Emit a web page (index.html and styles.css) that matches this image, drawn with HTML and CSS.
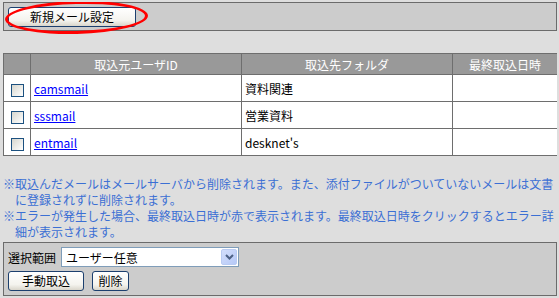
FILE: index.html
```html
<!DOCTYPE html>
<html lang="ja">
<head>
    <meta charset="UTF-8">
    <title>メール取込設定</title>
    <link rel="stylesheet" href="styles.css">
</head>
<body>
    <div class="toolbar">
        <button class="btn new-btn">新規メール設定</button>
        <span class="mark"></span>
    </div>

    <table class="mail-list">
        <thead>
            <tr>
                <th class="col-check"></th>
                <th class="col-user">取込元ユーザID</th>
                <th class="col-folder">取込先フォルダ</th>
                <th class="col-date">最終取込日時</th>
            </tr>
        </thead>
        <tbody>
            <tr>
                <td class="cell-check"><span class="check"></span></td>
                <td><a href="#">camsmail</a></td>
                <td>資料関連</td>
                <td></td>
            </tr>
            <tr>
                <td class="cell-check"><span class="check"></span></td>
                <td><a href="#">sssmail</a></td>
                <td>営業資料</td>
                <td></td>
            </tr>
            <tr>
                <td class="cell-check"><span class="check"></span></td>
                <td><a href="#">entmail</a></td>
                <td>desknet's</td>
                <td></td>
            </tr>
        </tbody>
    </table>

    <div class="notes">
        <p class="note">※取込んだメールはメールサーバから削除されます。また、添付ファイルがついていないメールは文書<br>に登録されずに削除されます。</p>
        <p class="note">※エラーが発生した場合、最終取込日時が赤で表示されます。最終取込日時をクリックするとエラー詳<br>細が表示されます。</p>
    </div>

    <div class="panel">
        <div class="range-row">
            <span class="range-label">選択範囲</span>
            <div class="select-box">
                <span class="select-text">ユーザー任意</span>
                <span class="select-arrow">
                    <svg width="9" height="6" viewBox="0 0 9 6"><path d="M1 1 L4.5 4.5 L8 1" fill="none" stroke="#4d6185" stroke-width="2"/></svg>
                </span>
            </div>
        </div>
        <div class="action-row">
            <button class="btn run-btn">手動取込</button>
            <button class="btn del-btn">削除</button>
        </div>
    </div>
</body>
</html>
```

FILE: styles.css
```css
* {
    box-sizing: border-box;
}

body {
    margin: 2px 2px 0 3px;
    background-color: #dedede;
    font-family: 'Noto Sans CJK JP', 'Noto Sans', sans-serif;
    font-size: 12px;
    color: #000;
}

/* Toolbar */
.toolbar {
    position: relative;
    height: 29px;
    padding: 4px 4px 3px;
    background-color: #cccccc;
    border: 1px solid #6b6b6b;
}

.btn {
    height: 20px;
    padding: 0 6px;
    font-family: inherit;
    font-size: 12px;
    line-height: 18px;
    color: #000;
    background: linear-gradient(#ffffff, #f4f3ee 70%, #d9d5cb);
    border: 1px solid #1c3f6e;
    border-radius: 3px;
    cursor: pointer;
}

.new-btn {
    width: 128px;
}

.mark {
    position: absolute;
    left: 1px;
    top: -2px;
    width: 143px;
    height: 33px;
    border: 3px solid #ff0000;
    border-radius: 50%;
    transform: rotate(-1.5deg);
    pointer-events: none;
}

/* Table */
.mail-list {
    width: 554px;
    margin-top: 22px;
    border-collapse: collapse;
    table-layout: fixed;
    background-color: #ffffff;
    border: 1px solid #6e6e6e;
}

.mail-list th,
.mail-list td {
    border: 1px solid #6e6e6e;
    padding: 0 3px;
    text-align: left;
    white-space: nowrap;
}

.mail-list th {
    height: 21px;
    background-color: #999999;
    color: #ffffff;
    font-weight: normal;
    text-align: center;
}

.mail-list td {
    height: 27px;
}

.col-check {
    width: 27px;
}

.col-user,
.col-folder {
    width: 211px;
}

.col-date {
    width: 105px;
}

.mail-list td.cell-check {
    text-align: center;
    padding: 0;
}

.check {
    display: inline-block;
    width: 13px;
    height: 13px;
    margin-top: 3px;
    vertical-align: middle;
    border: 1px solid #1c5180;
    background: linear-gradient(135deg, #d6d6ce, #ffffff);
}

.mail-list a {
    color: #0000ff;
}

/* Notes */
.notes {
    margin-top: 20px;
    color: #3b6fd4;
    line-height: 16px;
}

.note {
    margin: 0;
    padding-left: 12px;
    text-indent: -12px;
    white-space: nowrap;
}

/* Bottom panel */
.panel {
    margin-top: 2px;
    height: 54px;
    padding: 4px 4px;
    background-color: #cccccc;
    border: 1px solid #6b6b6b;
    display: flex;
    flex-direction: column;
    gap: 4px;
}

.range-row {
    display: flex;
    align-items: center;
    gap: 5px;
    height: 20px;
}

.select-box {
    width: 178px;
    height: 20px;
    display: flex;
    align-items: center;
    justify-content: space-between;
    padding: 0 1px 0 4px;
    background-color: #ffffff;
    border: 1px solid #7f9db9;
}

.select-arrow {
    width: 16px;
    height: 16px;
    display: flex;
    align-items: center;
    justify-content: center;
    background: linear-gradient(135deg, #d3defc, #b6c9f7);
    border: 1px solid #b9cbf3;
    border-radius: 2px;
}

.action-row {
    display: flex;
    gap: 8px;
}

.run-btn {
    width: 76px;
}

.del-btn {
    width: 37px;
    padding: 0;
}
```
